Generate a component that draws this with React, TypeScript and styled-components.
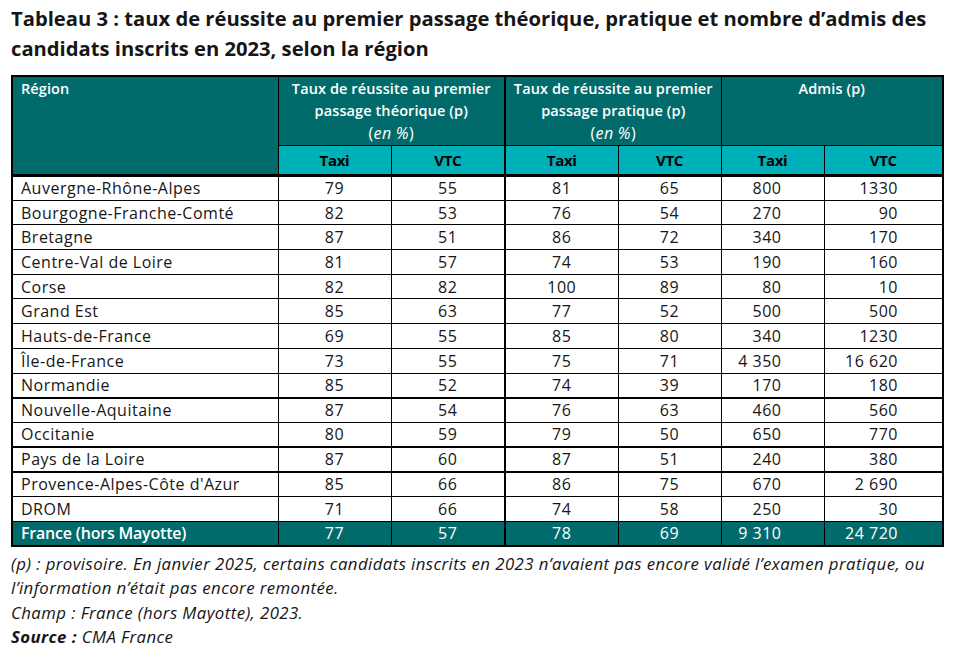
import React from "react";
import styled, { createGlobalStyle } from "styled-components";

const Global = createGlobalStyle`
  html, body { margin: 0; padding: 0; background: #fff; }
  body { font-family: "Open Sans", "Liberation Sans", sans-serif; color: #161616; }
`;

const Page = styled.div`
  width: 957px;
  height: 658px;
  padding: 3px 0 0 11px;
  box-sizing: border-box;
`;

const Title = styled.h1`
  margin: 0 0 12px 0;
  width: 940px;
  font-size: 20.2px;
  line-height: 30px;
  font-weight: 700;
  letter-spacing: 0;
  color: #161616;
`;

const Table = styled.table`
  border-collapse: collapse;
  table-layout: fixed;
  width: 931px;
  border: 2px solid #000;
  font-size: 16px;
`;

const HeadCell = styled.th<{ $align?: string; $thick?: boolean }>`
  background: #016b6c;
  color: #fff;
  font-weight: 600;
  font-size: 14.5px;
  line-height: 22px;
  height: 68px;
  box-sizing: border-box;
  vertical-align: top;
  text-align: ${(p) => p.$align || "center"};
  padding: 1px 6px 0 6px;
  border: 1px solid #000;
  border-left-width: ${(p) => (p.$thick ? "2px" : "1px")};
  letter-spacing: 0.1px;
`;

const SubCell = styled.th<{ $thick?: boolean }>`
  background: #00b0b9;
  color: #000;
  font-weight: 700;
  font-size: 15px;
  height: 28px;
  padding: 0;
  text-align: center;
  vertical-align: middle;
  border: 1px solid #000;
  border-bottom: 3px solid #000;
  border-left-width: ${(p) => (p.$thick ? "2px" : "1px")};
  letter-spacing: -0.3px;
`;

const RegionHead = styled(HeadCell)`
  border-bottom: 3px solid #000;
  padding-left: 8px;
`;

const Unit = styled.span`
  font-weight: 400;
  font-size: 16px;
  letter-spacing: 0.3px;
`;

const Em = styled.span`
  font-style: italic;
`;

const Row = styled.tr<{ $total?: boolean; $thickBottom?: boolean }>`
  height: 24.7px;
  background: ${(p) => (p.$total ? "#016b6c" : "#fff")};
  color: ${(p) => (p.$total ? "#fff" : "#161616")};
  & > td {
    border-bottom: ${(p) => (p.$thickBottom ? "2px" : "1px")} solid #000;
  }
`;

const Cell = styled.td<{ $align?: string; $pr?: number; $thick?: boolean; $bold?: boolean }>`
  padding: 0 ${(p) => (p.$pr != null ? `${p.$pr}px` : "8px")} 0 8px;
  text-align: ${(p) => p.$align || "center"};
  font-weight: ${(p) => (p.$bold ? 600 : 400)};
  letter-spacing: ${(p) => (p.$bold ? "-0.2px" : "0.5px")};
  line-height: 22px;
  border-left: ${(p) => (p.$thick ? "2px" : "1px")} solid #000;
  white-space: nowrap;
`;

const Notes = styled.div`
  margin-top: 5px;
  font-size: 16.8px;
  line-height: 24.5px;
  letter-spacing: 0.42px;
  font-style: italic;
  color: #161616;
  width: 940px;
`;

const Note = styled.p`
  margin: 0;
`;

type R = [string, number, number, number, number, string, string];

const rows: R[] = [
  ["Auvergne-Rhône-Alpes", 79, 55, 81, 65, "800", "1330"],
  ["Bourgogne-Franche-Comté", 82, 53, 76, 54, "270", "90"],
  ["Bretagne", 87, 51, 86, 72, "340", "170"],
  ["Centre-Val de Loire", 81, 57, 74, 53, "190", "160"],
  ["Corse", 82, 82, 100, 89, "80", "10"],
  ["Grand Est", 85, 63, 77, 52, "500", "500"],
  ["Hauts-de-France", 69, 55, 85, 80, "340", "1230"],
  ["Île-de-France", 73, 55, 75, 71, "4 350", "16 620"],
  ["Normandie", 85, 52, 74, 39, "170", "180"],
  ["Nouvelle-Aquitaine", 87, 54, 76, 63, "460", "560"],
  ["Occitanie", 80, 59, 79, 50, "650", "770"],
  ["Pays de la Loire", 87, 60, 87, 51, "240", "380"],
  ["Provence-Alpes-Côte d'Azur", 85, 66, 86, 75, "670", "2 690"],
  ["DROM", 71, 66, 74, 58, "250", "30"],
];

const total: R = ["France (hors Mayotte)", 77, 57, 78, 69, "9 310", "24 720"];

const thickAfter = new Set(["Normandie", "Occitanie", "Pays de la Loire"]);

const DataRow = ({ r, totalRow }: { r: R; totalRow?: boolean }) => (
  <Row $total={totalRow} $thickBottom={thickAfter.has(r[0])}>
    <Cell $align="left" $bold={totalRow}>{r[0]}</Cell>
    <Cell>{r[1]}</Cell>
    <Cell>{r[2]}</Cell>
    <Cell $thick>{r[3]}</Cell>
    <Cell>{r[4]}</Cell>
    <Cell $align="right" $pr={42}>{r[5]}</Cell>
    <Cell $align="right" $pr={44}>{r[6]}</Cell>
  </Row>
);

const UnitLine = () => (
  <Unit>
    (<Em>en %</Em>)
  </Unit>
);

export default function App() {
  return (
    <Page>
      <Global />
      <Title>
        Tableau 3 : taux de réussite au premier passage théorique, pratique et nombre d’admis des
        candidats inscrits en 2023, selon la région
      </Title>
      <Table>
        <colgroup>
          <col style={{ width: 266 }} />
          <col style={{ width: 113 }} />
          <col style={{ width: 114 }} />
          <col style={{ width: 113 }} />
          <col style={{ width: 103 }} />
          <col style={{ width: 103 }} />
          <col style={{ width: 119 }} />
        </colgroup>
        <thead>
          <tr>
            <RegionHead rowSpan={2} $align="left">Région</RegionHead>
            <HeadCell colSpan={2}>
              Taux de réussite au premier
              <br />
              passage théorique (p)
              <br />
              <UnitLine />
            </HeadCell>
            <HeadCell colSpan={2} $thick>
              Taux de réussite au premier
              <br />
              passage pratique (p)
              <br />
              <UnitLine />
            </HeadCell>
            <HeadCell colSpan={2}>Admis (p)</HeadCell>
          </tr>
          <tr>
            <SubCell>Taxi</SubCell>
            <SubCell>VTC</SubCell>
            <SubCell $thick>Taxi</SubCell>
            <SubCell>VTC</SubCell>
            <SubCell>Taxi</SubCell>
            <SubCell>VTC</SubCell>
          </tr>
        </thead>
        <tbody>
          {rows.map((r) => (
            <DataRow key={r[0]} r={r} />
          ))}
          <DataRow r={total} totalRow />
        </tbody>
      </Table>
      <Notes>
        <Note>
          (p) : provisoire. En janvier 2025, certains candidats inscrits en 2023 n’avaient pas encore validé l’examen pratique, ou
          l’information n’était pas encore remontée.
        </Note>
        <Note>Champ : France (hors Mayotte), 2023.</Note>
        <Note>
          <b>Source :</b> CMA France
        </Note>
      </Notes>
    </Page>
  );
}
